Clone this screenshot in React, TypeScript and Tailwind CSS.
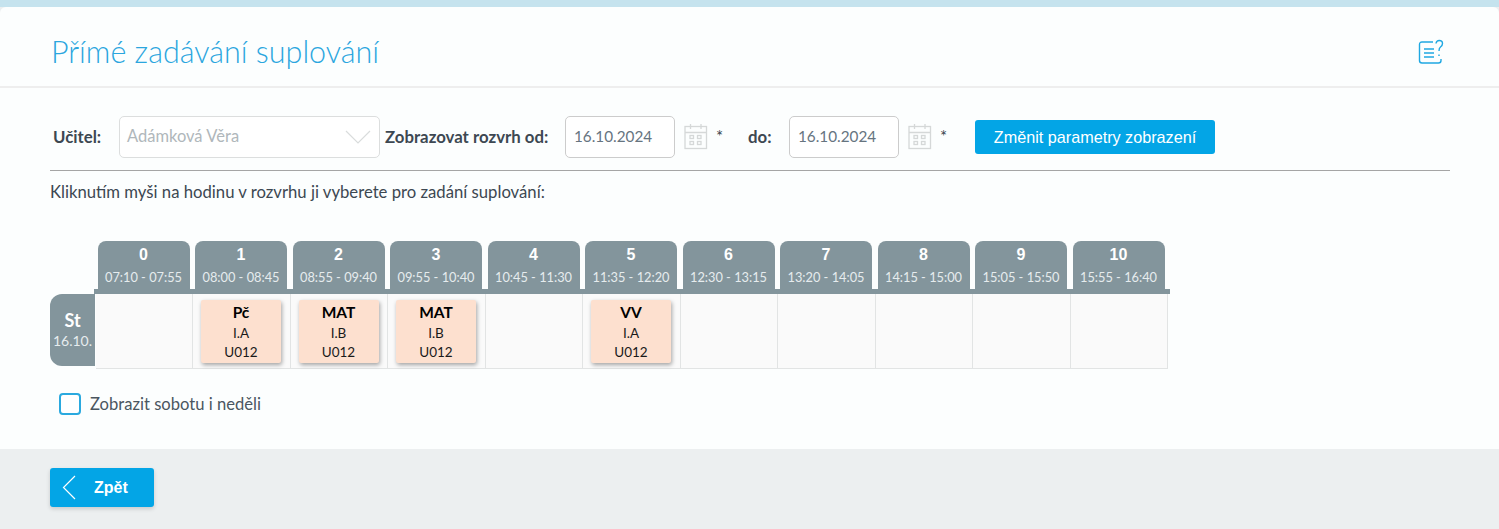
const lessons: { no: string; time: string; subject?: string; group?: string; room?: string }[] = [
  { no: '0', time: '07:10 - 07:55' },
  { no: '1', time: '08:00 - 08:45', subject: 'Pč', group: 'I.A', room: 'U012' },
  { no: '2', time: '08:55 - 09:40', subject: 'MAT', group: 'I.B', room: 'U012' },
  { no: '3', time: '09:55 - 10:40', subject: 'MAT', group: 'I.B', room: 'U012' },
  { no: '4', time: '10:45 - 11:30' },
  { no: '5', time: '11:35 - 12:20', subject: 'VV', group: 'I.A', room: 'U012' },
  { no: '6', time: '12:30 - 13:15' },
  { no: '7', time: '13:20 - 14:05' },
  { no: '8', time: '14:15 - 15:00' },
  { no: '9', time: '15:05 - 15:50' },
  { no: '10', time: '15:55 - 16:40' },
];

function CalendarIcon() {
  return (
    <svg width="24" height="27" viewBox="0 0 24 27" fill="none" stroke="#d5d8d8" strokeWidth="1.3" className="shrink-0 mt-[-2px]">
      <rect x="1" y="3.5" width="21.5" height="22" />
      <path d="M1 9.5h21.5M6.5 1v5M17 1v5" />
      <rect x="6" y="12.5" width="3.5" height="3" />
      <rect x="13.5" y="12.5" width="3.5" height="3" />
      <rect x="6" y="18.5" width="3.5" height="3" />
      <rect x="13.5" y="18.5" width="3.5" height="3" />
    </svg>
  );
}

function DateField() {
  return (
    <div className="flex items-center w-[110px] h-[42px] border border-[#ccc] rounded-[5px] bg-white pl-[8px] pb-[2px] text-[15.3px] text-[#66747f]">
      16.10.2024
    </div>
  );
}

export default function App() {
  return (
    <div className="h-[529px] bg-[#eceff0] font-['Lato',sans-serif] text-[#3d4852] overflow-hidden">
      <div className="h-[7px] bg-[#c5e3ee]" />
      <div className="h-[442px] bg-[#fcfefe] rounded-tl-[6px] rounded-tr-[6px]">
        <header className="flex items-center justify-between h-[81px] pl-[51px] pr-[55px] border-b-2 border-[#eeeeee]">
          <h1 className="text-[30.500px] font-light text-[#2ba6de] leading-none pt-[24px] pb-[14px]">Přímé zadávání suplování</h1>
          <svg width="26" height="26" viewBox="0 0 26 26" fill="none" stroke="#1fa8e2" strokeWidth="1.4" className="mt-[11px]">
            <path d="M15 3H4Q1.5 3 1.5 5.500V21.500Q1.500 24 4 24H20.500Q23 24 23 21.500V20" />
            <path d="M6 10h10M6 14h10M6 18h10" />
            <path d="M18 4.500Q18.500 1.500 21.200 1.500Q24.500 1.500 24.500 4.500Q24.500 6.500 22.500 8Q21 9.200 21 12" />
            <path d="M21 15.500v1.500" />
          </svg>
        </header>

        <div className="pl-[50px] pr-[49px]">
          <div className="flex items-center h-[83px] border-b border-[#a5a5a5] pt-[28px] pb-[12px] text-[16.800px]">
            <label className="font-bold ml-[3px] w-[66px]">Učitel:</label>
            <div className="flex items-center justify-between w-[261px] h-[42px] border border-[#dcdede] rounded-[5px] bg-white pl-[7px] pr-[8px] text-[16.500px] text-[#b0b7bb]">
              <span className="mt-[-2px]">Adámková Věra</span>
              <svg width="26" height="14" viewBox="0 0 26 14" fill="none" stroke="#d9dcdc" strokeWidth="1.2">
                <path d="M1 1l12 12L25 1" />
              </svg>
            </div>
            <label className="font-bold ml-[5px] w-[180px]">Zobrazovat rozvrh od:</label>
            <DateField />
            <div className="ml-[9px]"><CalendarIcon /></div>
            <span className="ml-[8px] w-[32px]">*</span>
            <label className="font-bold w-[41px]">do:</label>
            <DateField />
            <div className="ml-[9px]"><CalendarIcon /></div>
            <span className="ml-[8px] w-[35px]">*</span>
            <button type="button" className="h-[34px] w-[240px] rounded-[3px] bg-[#03a5e6] text-white font-['Liberation_Sans',sans-serif] text-[16.200px]">
              Změnit parametry zobrazení
            </button>
          </div>

          <p className="text-[16.700px] mt-[11px] leading-[20px]">Kliknutím myši na hodinu v rozvrhu ji vyberete pro zadání suplování:</p>

          <div className="mt-[39px] w-[1120px]">
            <div className="flex ml-[44px] w-[1076px] pl-[3.500px] border-b-[5px] border-[#83959c]">
              {lessons.map(l => (
                <div key={l.no} className="w-[92px] mr-[5.500px] shrink-0 h-[48px] bg-[#83959c] rounded-t-[8px] text-center text-white">
                  <div className="text-[16px] font-bold leading-[20px] pt-[4px] font-['Liberation_Sans',sans-serif]">{l.no}</div>
                  <div className="text-[12.800px] leading-[18px] mt-[3px] text-[#e6ecee]">{l.time}</div>
                </div>
              ))}
            </div>
            <div className="flex">
              <div className="w-[45px] mr-[0.500px] h-[72px] shrink-0 bg-[#83959c] rounded-l-[12px] text-center text-white">
                <div className="text-[18px] font-bold pt-[16px] leading-[20px]">St</div>
                <div className="text-[14px] text-[#e6ecee] leading-[18px] mt-[2px]">16.10.</div>
              </div>
              {lessons.map(l => (
                <div key={l.no} className="w-[97.500px] h-[75px] shrink-0 bg-[#fafafa] border-r border-b border-[#e2e4e4] pl-[8px] pt-[6px]">
                  {l.subject && (
                    <div className="w-[80px] h-[63px] bg-[#fde0cf] rounded-[2px] shadow-[1px_2px_4px_rgba(0,0,0,0.35)] text-center text-[#1a1a1a]">
                      <div className="text-[15.500px] font-bold leading-[20px] pt-[2px] text-black">{l.subject}</div>
                      <div className="text-[13.500px] leading-[19px] mt-[2px]">{l.group}</div>
                      <div className="text-[13.500px] leading-[19px]">{l.room}</div>
                    </div>
                  )}
                </div>
              ))}
            </div>
          </div>

          <label className="flex items-center mt-[23px] ml-[9px] text-[16.600px] text-[#4a5660]">
            <span className="w-[22px] h-[22px] border-2 border-[#2aa9df] rounded-[4px] bg-white mr-[9px]" />
            Zobrazit sobotu i neděli
          </label>
        </div>
      </div>

      <footer className="pl-[50px] pt-[19px]">
        <button type="button" className="flex items-center w-[104px] h-[39px] rounded-[3px] bg-[#03a5e6] text-white shadow-[0_2px_4px_rgba(0,0,0,0.15)] font-['Liberation_Sans',sans-serif] font-bold text-[16px]">
          <svg width="14" height="25" viewBox="0 0 14 25" fill="none" stroke="#ffffff" strokeWidth="1.2" className="ml-[12px] mr-[18px]">
            <path d="M13 1L1.500 12.500L13 24" />
          </svg>
          Zpět
        </button>
      </footer>
    </div>
  );
}
